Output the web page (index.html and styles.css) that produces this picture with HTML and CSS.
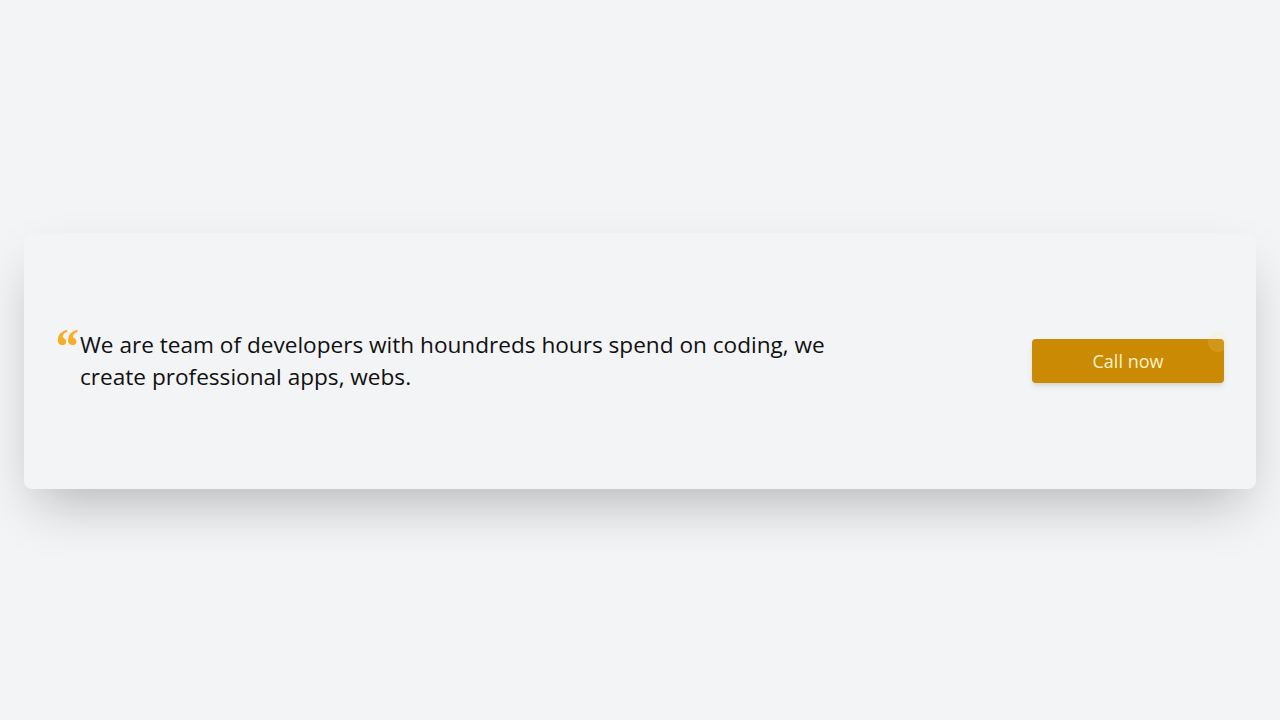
FILE: index.html
```html
<!DOCTYPE html>
<html lang="en">
<head>
<meta charset="utf-8">
<title>Call to action</title>
<link rel="stylesheet" href="styles.css">
</head>
<body>
<main class="page">
  <section class="card">
    <div class="quote">
      <span class="quote-mark">“</span>
      <p class="quote-text">We are team of developers with houndreds hours spend on coding, we create professional apps, webs.</p>
    </div>
    <div class="action">
      <button class="btn">Call now</button>
      <span class="ping"></span>
    </div>
  </section>
</main>
</body>
</html>
```
FILE: styles.css
```css
html, body {
  margin: 0;
  padding: 0;
  background: #f3f4f6;
}
body {
  font-family: "Open Sans", "Noto Sans", sans-serif;
  color: #111111;
}
.page {
  height: 720px;
  box-sizing: border-box;
  padding: 2px 24px 0;
  display: flex;
  align-items: center;
}
.card {
  flex: 1;
  height: 256px;
  box-sizing: border-box;
  padding: 0 32px;
  background: #f3f4f6;
  border-radius: 8px;
  box-shadow: 0 25px 50px -12px rgba(0, 0, 0, 0.25);
  display: flex;
  align-items: center;
  justify-content: space-between;
}
.quote {
  display: flex;
  align-items: flex-start;
}
.quote-mark {
  font-family: "Liberation Serif", serif;
  font-weight: bold;
  font-style: italic;
  font-size: 50px;
  line-height: 48px;
  color: #f6ad27;
  margin-top: -7px;
  margin-left: -3px;
  width: 27px;
  flex: none;
}
.quote-text {
  margin: 0;
  max-width: 768px;
  font-size: 22.6px;
  line-height: 32px;
  color: #111111;
}
.action {
  position: relative;
}
.btn {
  display: block;
  width: 192px;
  height: 44px;
  border: none;
  border-radius: 4px;
  background: #ca8a04;
  color: #fef3c7;
  font-family: inherit;
  font-size: 18px;
  box-shadow: 0 4px 6px -1px rgba(0,0,0,0.1), 0 2px 4px -1px rgba(0,0,0,0.06);
}
.ping {
  position: absolute;
  top: -6px;
  right: -3px;
  width: 18px;
  height: 18px;
  border-radius: 50%;
  background: rgba(253, 230, 138, 0.15);
  box-shadow: 0 0 0 1px rgba(253, 230, 138, 0.2);
}
```
